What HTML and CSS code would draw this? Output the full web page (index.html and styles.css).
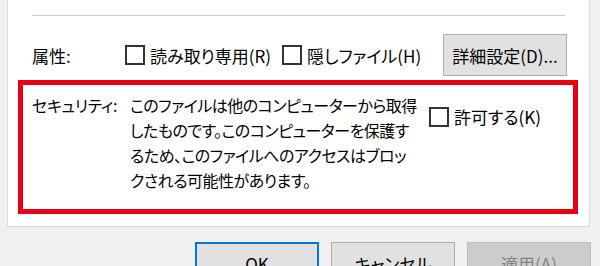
FILE: index.html
```html
<!DOCTYPE html>
<html lang="ja">
<head>
<meta charset="utf-8">
<link rel="stylesheet" href="styles.css">
</head>
<body>
<div class="panel">
  <div class="separator"></div>
  <div class="attr-row">
    <span class="row-label">属性:</span>
    <label class="check"><span class="box"></span><span class="check-text">読み取り専用(R)</span></label>
    <label class="check check-second"><span class="box"></span><span class="check-text">隠しファイル(H)</span></label>
    <button class="btn btn-details">詳細設定(D)...</button>
  </div>
  <div class="security">
    <span class="sec-label">セキュリティ:</span>
    <p class="sec-text">このファイルは他のコンピューターから取得<br>したものです。このコンピューターを保護す<br>るため、このファイルへのアクセスはブロッ<br>クされる可能性があります。</p>
    <label class="check check-allow"><span class="box"></span><span class="check-text">許可する(K)</span></label>
  </div>
</div>
<div class="actions">
  <button class="btn btn-default">OK</button>
  <button class="btn">キャンセル</button>
  <button class="btn btn-disabled">適用(A)</button>
</div>
</body>
</html>
```
FILE: styles.css
```css
html, body {
  margin: 0;
  padding: 0;
}
body {
  width: 600px;
  height: 266px;
  overflow: hidden;
  background: #f0f0f0;
  font-family: "Noto Sans CJK JP", "Noto Sans", sans-serif;
  font-size: 17px;
  color: #000;
  font-feature-settings: "palt";
}
.panel {
  margin-left: 7px;
  width: 581px;
  background: #fff;
  border: 1px solid #dadada;
  border-top: none;
  padding-top: 15px;
  padding-bottom: 12px;
}
.separator {
  height: 1px;
  background: #cdcdcd;
  margin: 0 24px;
}
.attr-row {
  display: flex;
  align-items: center;
  height: 42px;
  margin-top: 18px;
  padding-left: 24px;
  padding-right: 22px;
}
.row-label {
  width: 93px;
  flex: none;
}
.check {
  display: flex;
  align-items: center;
  gap: 5px;
  white-space: nowrap;
}
.check-second {
  margin-left: 11px;
}
.box {
  box-sizing: border-box;
  width: 20px;
  height: 20px;
  border: 2px solid #333;
  background: #fff;
  flex: none;
}
.check-text {
  line-height: 25px;
}
.btn {
  font: inherit;
  color: #000;
  width: 124px;
  height: 42px;
  background: #e1e1e1;
  border: 1px solid #adadad;
  padding: 0;
  margin: 0;
  flex: none;
}
.btn-details {
  margin-left: auto;
}
.security {
  display: flex;
  align-items: flex-start;
  margin: 4px 11px 0 10px;
  border: 5px solid #e60012;
  padding: 8px 0 16px 9px;
}
.sec-label {
  width: 98px;
  flex: none;
  font-size: 16px;
  letter-spacing: -0.3px;
  line-height: 25px;
  white-space: nowrap;
}
.sec-text {
  margin: 0;
  font-size: 16px;
  letter-spacing: -0.5px;
  line-height: 25px;
  white-space: nowrap;
  width: 299px;
  flex: none;
}
.check-allow {
  margin-top: 11px;
}
.actions {
  display: flex;
  justify-content: flex-end;
  gap: 12px;
  margin-top: 15px;
  padding-right: 9px;
}
.btn-default {
  border: 2px solid #0078d7;
}
.btn-disabled {
  background: #cccccc;
  border-color: #bfbfbf;
  color: #838383;
}
```
